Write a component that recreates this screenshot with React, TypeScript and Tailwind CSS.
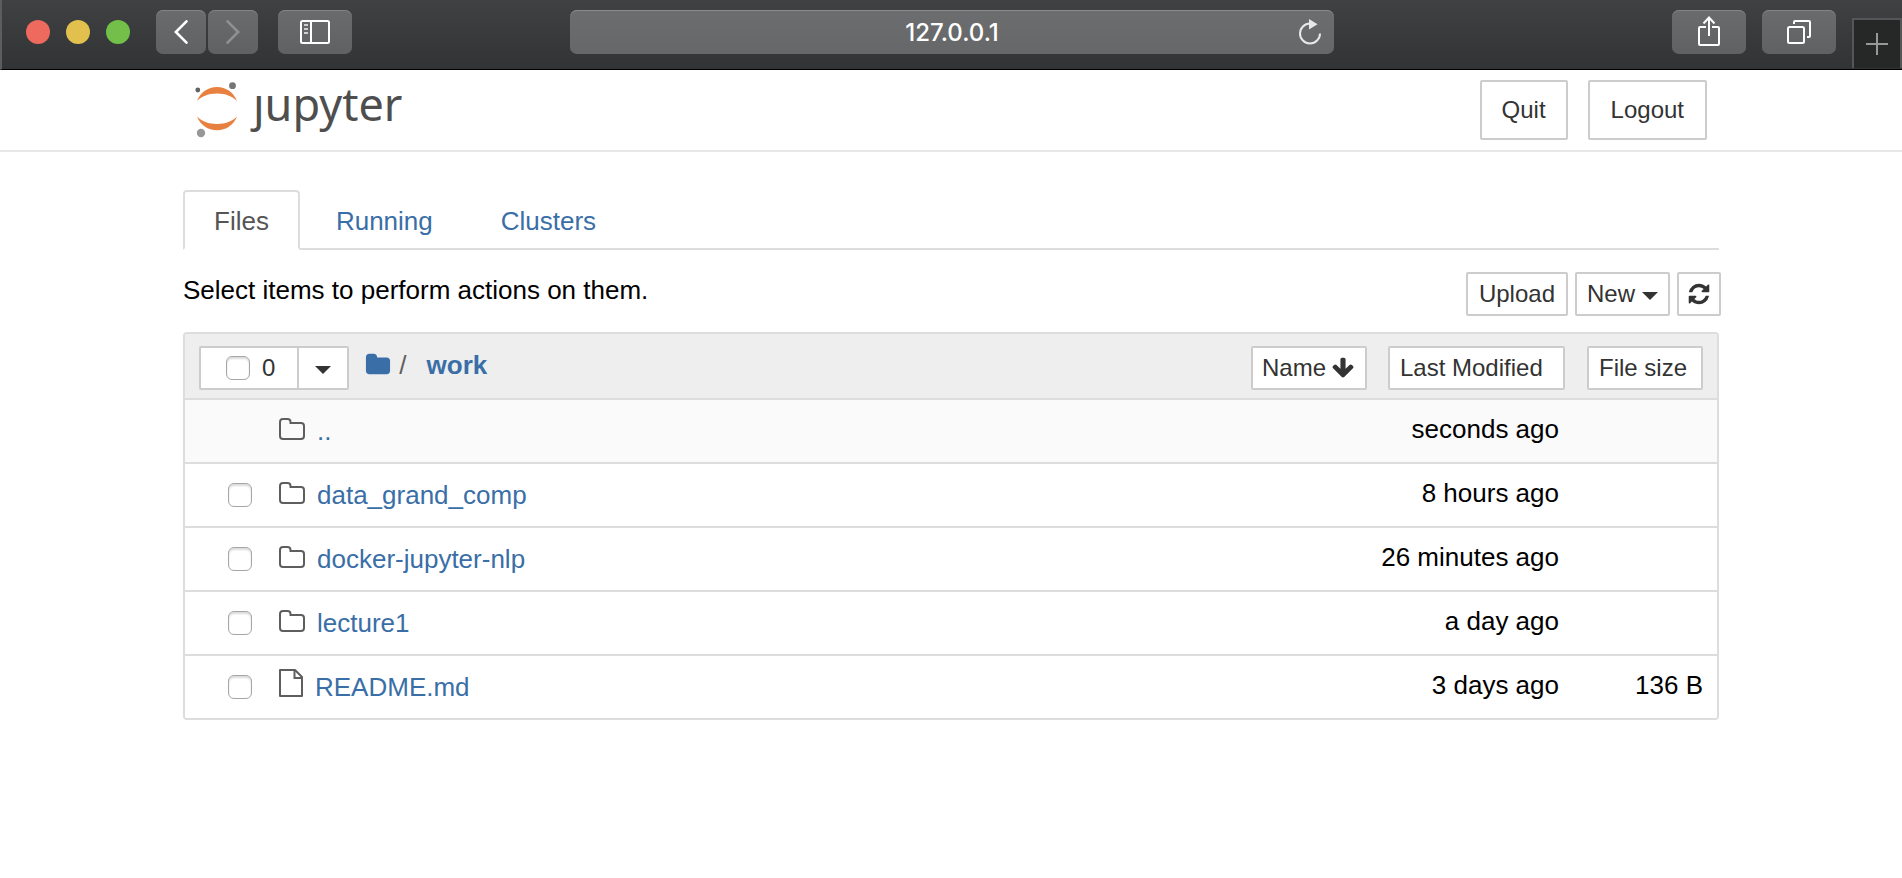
import React from "react";

const LINK = "text-[#3a6ea7] hover:underline";
const BUTTON =
  "inline-flex items-center whitespace-nowrap rounded-[2px] border-2 border-[#ccc] bg-white text-2xl leading-none text-[#333]";
const CHROME_BUTTON =
  "flex h-11 items-center justify-center rounded-[7px] bg-linear-to-b from-[#6a6b6d] to-[#606163] shadow-[inset_0_1px_0_#838485]";
const CHECKBOX =
  "size-6 shrink-0 appearance-none rounded-[6px] border border-[#a6a6a6] bg-white shadow-[inset_0_2px_2px_rgba(0,0,0,0.14)] checked:bg-[#3a6ea7]";

type Entry = { name: string; kind: "folder" | "file"; modified: string; size?: string; parent?: boolean };

const ENTRIES: Entry[] = [
  { name: "..", kind: "folder", modified: "seconds ago", parent: true },
  { name: "data_grand_comp", kind: "folder", modified: "8 hours ago" },
  { name: "docker-jupyter-nlp", kind: "folder", modified: "26 minutes ago" },
  { name: "lecture1", kind: "folder", modified: "a day ago" },
  { name: "README.md", kind: "file", modified: "3 days ago", size: "136 B" },
];

function Glyph({ d, className }: { d: string; className: string }) {
  return (
    <svg viewBox="0 0 1792 1792" fill="currentColor" className={className} aria-hidden="true">
      <path d={d} />
    </svg>
  );
}

const REFRESH =
  "M1639 1056q0 5-1 7-64 268-268 434.5t-478 166.5q-146 0-282.5-55t-243.5-157l-129 129q-19 19-45 19t-45-19-19-45v-448q0-26 19-45t45-19h448q26 0 45 19t19 45-19 45l-137 137q71 66 161 102t187 36q134 0 250-65t186-179q11-17 53-117 8-23 30-23h192q13 0 22.5 9.5t9.5 22.5zm25-800v448q0 26-19 45t-45 19h-448q-26 0-45-19t-19-45 19-45l138-138q-148-137-349-137-134 0-250 65t-186 179q-11 17-53 117-8 23-30 23h-199q-13 0-22.5-9.5t-9.5-22.5v-7q65-268 270-434.5t480-166.5q146 0 284 55.5t245 156.5l130-129q19-19 45-19t45 19 19 45z";
const ARROW_DOWN =
  "M1675 832q0 53-37 90l-651 652q-39 37-91 37-53 0-90-37l-651-652q-38-36-38-90 0-53 38-91l74-75q39-37 91-37 53 0 90 37l294 294v-704q0-52 38-90t90-38h128q52 0 90 38t38 90v704l294-294q37-37 90-37 52 0 91 37l75 75q37 39 37 91z";
const FOLDER =
  "M1728 608v704q0 92-66 158t-158 66h-1216q-92 0-158-66t-66-158v-960q0-92 66-158t158-66h320q92 0 158 66t66 158v32h672q92 0 158 66t66 158z";

function Caret() {
  return (
    <svg viewBox="0 0 16 8" className="mt-1 h-2 w-4" fill="currentColor" aria-hidden="true">
      <path d="M0 0h16L8 8z" />
    </svg>
  );
}

function EntryIcon({ kind }: { kind: Entry["kind"] }) {
  if (kind === "file") {
    return (
      <svg viewBox="0 0 24 28" className="mb-2 h-7 w-6 shrink-0" fill="none" stroke="#5e5e5e" strokeWidth="2" aria-hidden="true">
        <path d="M1 1h15l7 7v19H1z" strokeLinejoin="round" />
        <path d="M15.500 1v8H23" />
      </svg>
    );
  }
  return (
    <svg viewBox="0 0 26 22" className="mb-1 h-[22px] w-[26px] shrink-0" fill="none" stroke="#5e5e5e" strokeWidth="2" aria-hidden="true">
      <path d="M1 4a3 3 0 0 1 3-3h4.500a3 3 0 0 1 3 3v1H22a3 3 0 0 1 3 3v10a3 3 0 0 1-3 3H4a3 3 0 0 1-3-3z" />
    </svg>
  );
}

function BrowserBar() {
  return (
    <div className="grid h-[70px] grid-cols-[1fr_minmax(0,764px)_1fr] items-start border-b border-b-black border-l-2 border-l-[#5c5d5e] bg-linear-to-b from-[#3f4143] to-[#323335] text-white">
      <div className="flex items-center pt-2.5 pl-6">
        <div className="flex gap-4">
          <button aria-label="Close" className="size-6 rounded-full bg-[#ee6a5f]" />
          <button aria-label="Minimize" className="size-6 rounded-full bg-[#e1c04d]" />
          <button aria-label="Zoom" className="size-6 rounded-full bg-[#72c04a]" />
        </div>
        <button aria-label="Back" className={`${CHROME_BUTTON} ml-[26px] w-[50px]`}>
          <svg viewBox="0 0 14 24" className="h-6 w-3.5" fill="none" stroke="#fff" strokeWidth="2.600" strokeLinecap="round" aria-hidden="true">
            <path d="M12.500 1.300 1.800 12l10.700 10.700" />
          </svg>
        </button>
        <button aria-label="Forward" className={`${CHROME_BUTTON} ml-0.5 w-[50px]`}>
          <svg viewBox="0 0 14 24" className="h-6 w-3.5" fill="none" stroke="#8f9092" strokeWidth="2.600" strokeLinecap="round" aria-hidden="true">
            <path d="M1.500 1.300 12.200 12 1.500 22.700" />
          </svg>
        </button>
        <button aria-label="Show sidebar" className={`${CHROME_BUTTON} ml-5 w-[74px]`}>
          <svg viewBox="0 0 30 24" className="h-6 w-[30px]" fill="none" stroke="#fff" strokeWidth="2" aria-hidden="true">
            <rect x="1" y="1" width="28" height="22" rx="1.500" />
            <path d="M11 1v22" />
            <path d="M4 5h4M4 9h4M4 13h4" stroke="#d0d0d1" />
          </svg>
        </button>
      </div>
      <div className="mt-2.5 flex h-11 items-center rounded-[7px] bg-linear-to-b from-[#6c6d6f] to-[#666768] pr-3 pl-9 shadow-[inset_0_1px_0_#8a8b8c]">
        <input
          aria-label="Address"
          defaultValue="127.0.0.1"
          className="min-w-0 flex-1 bg-transparent pt-0.5 text-center font-['Inter',sans-serif] text-2xl font-medium outline-none"
        />
        <button aria-label="Reload page">
          <svg viewBox="0 0 24 26" className="h-[26px] w-6" aria-hidden="true">
            <path d="M22 14.500a10 10 0 1 1-10-10" fill="none" stroke="#e8e8e8" strokeWidth="2" />
            <path d="M11 0l8.500 5.200L11 10.500z" fill="#e8e8e8" />
          </svg>
        </button>
      </div>
      <div className="flex justify-end gap-4">
        <button aria-label="Share" className={`${CHROME_BUTTON} mt-2.5 w-[74px]`}>
          <svg viewBox="0 0 22 30" className="mb-0.5 h-[30px] w-[22px]" fill="none" stroke="#fff" strokeWidth="2" aria-hidden="true">
            <path d="M8 11H2a1 1 0 0 0-1 1v16a1 1 0 0 0 1 1h18a1 1 0 0 0 1-1V12a1 1 0 0 0-1-1h-6" />
            <path d="M11 20V2M5.500 7.500 11 1.500l5.500 6" />
          </svg>
        </button>
        <button aria-label="Show all tabs" className={`${CHROME_BUTTON} mt-2.5 w-[74px]`}>
          <svg viewBox="0 0 24 24" className="size-6" fill="none" stroke="#fff" strokeWidth="2" aria-hidden="true">
            <rect x="1" y="7" width="16" height="16" rx="1.500" />
            <path d="M7 4V2a1 1 0 0 1 1-1h14a1 1 0 0 1 1 1v14a1 1 0 0 1-1 1h-2" />
          </svg>
        </button>
        <button
          aria-label="New tab"
          className="mt-[18px] flex h-[50px] w-[50px] items-center justify-center border-t-2 border-r-2 border-l-2 border-[#555657] bg-[#262727]"
        >
          <svg viewBox="0 0 22 22" className="size-[22px]" stroke="#97989a" strokeWidth="2" aria-hidden="true">
            <path d="M11 0v22M0 11h22" />
          </svg>
        </button>
      </div>
    </div>
  );
}

function Logo() {
  return (
    <a href="#home" aria-label="jupyter" className="flex items-center gap-4">
      <svg viewBox="0 0 42 56" className="h-14 w-[42px]" aria-hidden="true">
        <path d="M2 19C5.200 10.500 13 5 22 5s16.800 5.500 20 14C37 14.200 30.500 11.500 22 11.500S7 14.200 2 19z" fill="#e8803f" />
        <path d="M2 34.500C5.200 43 13 48.300 22 48.300s16.800-5.300 20-13.800c-5 4.800-11.500 7.500-20 7.500S7 39.300 2 34.500z" fill="#e8803f" />
        <circle cx="37.500" cy="3.700" r="3.400" fill="#767677" />
        <circle cx="2.800" cy="8" r="2.400" fill="#616262" />
        <circle cx="6" cy="51" r="4.200" fill="#989798" />
      </svg>
      <span className="pb-3 font-['Noto_Sans',sans-serif] text-[45px] leading-[48px] text-[#4e4e4e]">ȷupyter</span>
    </a>
  );
}

export default function App() {
  return (
    <div className="min-h-screen bg-white font-['Liberation_Sans',Arial,sans-serif] text-[26px] leading-9 text-black">
      <BrowserBar />

      <header className="border-b-2 border-[#e7e7e7]">
        <div className="mx-auto flex max-w-[1536px] items-center justify-between px-3 py-2.5">
          <Logo />
          <div className="flex gap-5">
            <button className={`${BUTTON} h-[60px] px-5`}>Quit</button>
            <button className={`${BUTTON} h-[60px] px-[21px]`}>Logout</button>
          </div>
        </div>
      </header>

      <main className="mx-auto max-w-[1536px] pt-[38px]">
        <nav className="flex gap-1 border-b-2 border-[#ddd]">
          <a href="#files" className="-mb-0.5 rounded-t-[4px] border-2 border-[#ddd] border-b-white bg-white px-[29px] pt-[11px] pb-[9px] text-[#555]">
            Files
          </a>
          <a href="#running" className="px-8 pt-[13px] pb-[7px] text-[#3a6ea7]">Running</a>
          <a href="#clusters" className="px-8 pt-[13px] pb-[7px] text-[#3a6ea7]">Clusters</a>
        </nav>

        <div className="mt-[22px] -mr-0.5 flex items-start justify-between">
          <p>Select items to perform actions on them.</p>
          <div className="flex gap-[7px]">
            <button className={`${BUTTON} h-11 px-[11px]`}>Upload</button>
            <button className={`${BUTTON} h-11 gap-[7px] px-2.5`}>
              New <Caret />
            </button>
            <button aria-label="Refresh" className={`${BUTTON} h-11 px-2`}>
              <Glyph d={REFRESH} className="size-6" />
            </button>
          </div>
        </div>

        <div className="mt-4 overflow-hidden rounded-[4px] border-2 border-[#ddd]">
          <table className="w-full table-fixed border-separate border-spacing-0">
            <colgroup>
              <col />
              <col className="w-[177px]" />
              <col className="w-[152px]" />
            </colgroup>
            <thead>
              <tr className="bg-[#eee]">
                <th className="p-0 font-normal">
                  <div className="flex h-16 items-center pt-1 pr-[21px] pl-3.5">
                    <div className="flex h-11 rounded-[2px] border-2 border-[#ccc] bg-white text-2xl text-[#333]">
                      <label className="flex items-center gap-3 pr-[22px] pl-[25px]">
                        <input type="checkbox" className={CHECKBOX} aria-label="Select all" />
                        <span>0</span>
                      </label>
                      <button aria-label="Select by type" className="flex w-[50px] items-center justify-center border-l-2 border-[#ccc]">
                        <Caret />
                      </button>
                    </div>
                    <nav className="flex items-center pb-1.5 pl-4">
                      <a href="#root" aria-label="Root folder" className="text-[#3a6ea7]">
                        <Glyph d={FOLDER} className="size-[26px]" />
                      </a>
                      <span className="pl-2 text-[#5e5e5e]">/</span>
                      <a href="#work" className={`${LINK} pl-5 font-bold`}>work</a>
                    </nav>
                    <button className={`${BUTTON} ml-auto h-11 gap-[5px] pr-2.5 pl-[9px]`}>
                      Name <Glyph d={ARROW_DOWN} className="size-6" />
                    </button>
                  </div>
                </th>
                <th className="p-0 pt-1 font-normal">
                  <button className={`${BUTTON} h-11 w-full px-2.5`}>Last Modified</button>
                </th>
                <th className="p-0 pt-1 pr-3.5 pl-[22px] font-normal">
                  <button className={`${BUTTON} h-11 w-full px-2.5`}>File size</button>
                </th>
              </tr>
            </thead>
            <tbody className="[&_td]:border-t-2 [&_td]:border-[#ddd] [&_td]:p-0">
              {ENTRIES.map((entry) => (
                <tr key={entry.name} className={entry.parent ? "bg-[#fafafa]" : "bg-white"}>
                  <td>
                    <div className="flex h-[62px] items-center pl-[43px]">
                      {entry.parent ? (
                        <span className="size-6" />
                      ) : (
                        <input type="checkbox" aria-label={`Select ${entry.name}`} className={CHECKBOX} />
                      )}
                      <a href={`#${entry.name}`} className={`${LINK} ml-[27px] flex items-center gap-3`}>
                        <EntryIcon kind={entry.kind} />
                        {entry.name}
                      </a>
                    </div>
                  </td>
                  <td>
                    <div className="flex justify-end pr-1.5 pb-1 whitespace-nowrap">{entry.modified}</div>
                  </td>
                  <td>
                    <div className="flex justify-end pr-3.5 pb-1 whitespace-nowrap">{entry.size}</div>
                  </td>
                </tr>
              ))}
            </tbody>
          </table>
        </div>
      </main>
    </div>
  );
}
